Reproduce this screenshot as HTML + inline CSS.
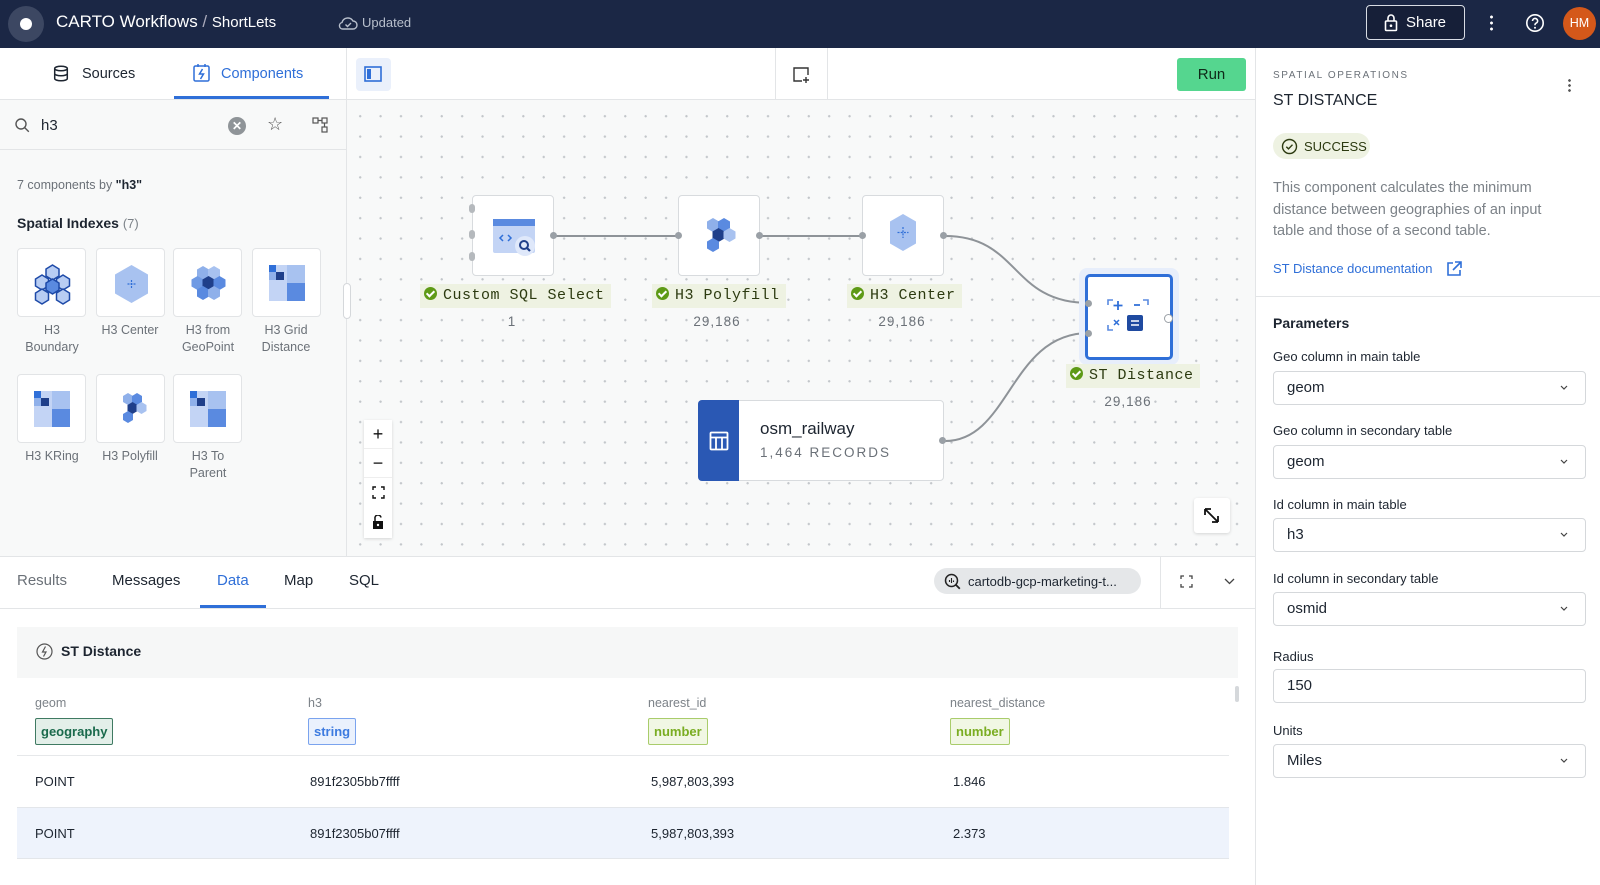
<!DOCTYPE html>
<html><head><meta charset="utf-8">
<style>
*{box-sizing:border-box;margin:0;padding:0}
body{width:1600px;height:885px;overflow:hidden;font-family:"Liberation Sans",sans-serif;color:#1d2530;background:#fff;position:relative}
.abs{position:absolute}
.hdr{left:0;top:0;width:1600px;height:48px;background:#1b2745}
.card{position:absolute;width:69px;height:69px;background:#fff;border:1px solid #e2e4e6;border-radius:4px}
.clbl{position:absolute;width:80px;text-align:center;font-size:12.5px;color:#6b7178;line-height:17px}
.node{position:absolute;width:82px;height:81px;background:#fff;border:1px solid #d8dbde;border-radius:4px}
.nlbl{position:absolute;height:24px;background:#eef2e2;font-family:"Liberation Mono",monospace;font-size:15px;color:#2c3a10;line-height:24px;padding:0 6px 0 4px;white-space:nowrap;letter-spacing:0.5px}
.chk{display:inline-block;width:13px;height:13px;border-radius:50%;background:#5e9a16;vertical-align:-1px;margin-right:6px;position:relative}
.chk:after{content:"";position:absolute;left:4px;top:2px;width:3px;height:6px;border:solid #fff;border-width:0 2px 2px 0;transform:rotate(45deg)}
.cnt{position:absolute;font-size:13.5px;color:#6b7178;letter-spacing:1px;text-align:center;width:100px}
.port{position:absolute;width:7px;height:7px;border-radius:50%;background:#9aa0a6}
.plbl{position:absolute;left:1273px;font-size:13px;color:#1d2530}
.inp{position:absolute;left:1273px;width:313px;height:34px;border:1px solid #d5d8db;border-radius:4px;font-size:15px;line-height:32px;padding-left:13px;color:#1d2530}
.inp svg{position:absolute;right:17px;top:13px}
.btab{position:absolute;top:572px;font-size:15px;color:#1d2530}
.th{position:absolute;top:696px;font-size:12.5px;color:#7c8288}
.badge{position:absolute;top:718px;height:27px;border-radius:2px;font-size:13px;font-weight:bold;line-height:25px;padding:0 5px}
.td{position:absolute;font-size:13px;color:#1d2530}
.zb{position:absolute;left:364px;width:28px;height:29px;background:#fff;border-bottom:1px solid #eee;text-align:center;font-size:18px;line-height:28px;color:#111}
</style></head><body>

<div class="abs hdr"></div>
<div class="abs" style="left:8px;top:6px;width:36px;height:36px;border-radius:50%;background:#3c4762"></div>
<div class="abs" style="left:20px;top:18px;width:12px;height:12px;border-radius:50%;background:#fff"></div>
<div class="abs" style="left:56px;top:12px;font-size:17px;color:#fff;font-weight:500">CARTO Workflows <span style="color:#aab">/</span> <span style="font-size:15px">ShortLets</span></div>
<svg class="abs" style="left:338px;top:15px" width="20" height="16" viewBox="0 0 20 16"><path d="M5 14h10a4 4 0 0 0 0-8 6 6 0 0 0-11 1.5A3.3 3.3 0 0 0 5 14z" fill="none" stroke="#b8bfcc" stroke-width="1.4"/><path d="M7.5 9.5l2 2 3.5-3.5" fill="none" stroke="#b8bfcc" stroke-width="1.4"/></svg>
<div class="abs" style="left:362px;top:15px;font-size:13px;color:#b8bfcc">Updated</div>
<div class="abs" style="left:1366px;top:5px;width:99px;height:35px;border:1px solid #d8dce4;border-radius:4px;background:#161f38"></div>
<svg class="abs" style="left:1384px;top:13px" width="14" height="19" viewBox="0 0 14 19"><rect x="1.5" y="8" width="11" height="9.5" rx="1" fill="none" stroke="#fff" stroke-width="1.6"/><path d="M4 8V5a3 3 0 0 1 6 0v3" fill="none" stroke="#fff" stroke-width="1.6"/><circle cx="7" cy="12.7" r="1.3" fill="#fff"/></svg>
<div class="abs" style="left:1406px;top:14px;font-size:15px;color:#fff;font-weight:500">Share</div>
<div class="abs" style="left:1490px;top:14px;width:3px;height:17px;background:radial-gradient(circle,#fff 1.3px,transparent 1.6px) 0 0/3px 6px"></div>
<svg class="abs" style="left:1525px;top:13px" width="20" height="20" viewBox="0 0 20 20"><circle cx="10" cy="10" r="8.2" fill="none" stroke="#fff" stroke-width="1.6"/><path d="M7.6 8a2.5 2.5 0 1 1 3.3 2.3c-.6.3-.9.7-.9 1.4v.5" fill="none" stroke="#fff" stroke-width="1.6"/><circle cx="10" cy="14.8" r="1" fill="#fff"/></svg>
<div class="abs" style="left:1563px;top:7px;width:33px;height:33px;border-radius:50%;background:#d4581a;color:#fff;font-size:12.5px;line-height:33px;text-align:center">HM</div>

<div class="abs" style="left:0;top:48px;width:347px;height:508px;background:#f8f9f9;border-right:1px solid #e3e5e7"></div>
<div class="abs" style="left:0;top:48px;width:346px;height:52px;background:#fff;border-bottom:1px solid #e3e5e7"></div>
<svg class="abs" style="left:53px;top:65px" width="16" height="17" viewBox="0 0 16 17"><ellipse cx="8" cy="3.5" rx="6.3" ry="2.3" fill="none" stroke="#1d2530" stroke-width="1.5"/><path d="M1.7 3.5v10c0 1.3 2.8 2.3 6.3 2.3s6.3-1 6.3-2.3v-10M1.7 8.5c0 1.3 2.8 2.3 6.3 2.3s6.3-1 6.3-2.3" fill="none" stroke="#1d2530" stroke-width="1.5"/></svg>
<div class="abs" style="left:82px;top:66px;font-size:14.5px;color:#1d2530">Sources</div>
<svg class="abs" style="left:193px;top:64px" width="17" height="18" viewBox="0 0 17 18"><rect x="1" y="2" width="15" height="15" rx="1.5" fill="none" stroke="#2f6fd8" stroke-width="1.5"/><path d="M9.5 5L6.5 10h4l-3 5" fill="none" stroke="#2f6fd8" stroke-width="1.5"/><path d="M5 0v3M12 0v3" stroke="#2f6fd8" stroke-width="1.5"/></svg>
<div class="abs" style="left:221px;top:66px;font-size:14.5px;color:#2f6fd8;font-weight:500">Components</div>
<div class="abs" style="left:174px;top:96px;width:155px;height:3px;background:#2f6fd8"></div>

<div class="abs" style="left:0;top:100px;width:346px;height:50px;background:#f8f9f9;border-bottom:1px solid #e3e5e7"></div>
<svg class="abs" style="left:15px;top:118px" width="15" height="15" viewBox="0 0 15 15"><circle cx="6" cy="6" r="5" fill="none" stroke="#555" stroke-width="1.4"/><path d="M9.8 9.8l4 4" stroke="#555" stroke-width="1.4"/></svg>
<div class="abs" style="left:41px;top:117px;font-size:15px;color:#1d2530">h3</div>
<div class="abs" style="left:228px;top:117px;width:18px;height:18px;border-radius:50%;background:#8f9498;color:#fff;font-size:12px;line-height:18px;text-align:center;font-weight:bold">✕</div>
<div class="abs" style="left:267px;top:114px;font-size:18px;color:#555">☆</div>
<svg class="abs" style="left:312px;top:117px" width="17" height="17" viewBox="0 0 17 17" fill="none" stroke="#555" stroke-width="1.2"><rect x="1" y="1" width="5" height="5"/><rect x="10" y="1" width="5" height="5"/><rect x="10" y="10" width="5" height="5"/><path d="M6 3.5h4M12.5 6v4"/></svg>

<div class="abs" style="left:17px;top:178px;font-size:12.5px;color:#6b7178">7 components by <b style="color:#1d2530">"h3"</b></div>
<div class="abs" style="left:17px;top:215px;font-size:14px;color:#1d2530;font-weight:bold">Spatial Indexes <span style="font-weight:normal;color:#7c8288;font-size:13px">(7)</span></div>

<div class="card" style="left:17px;top:248px"><svg width="69" height="69" viewBox="0 0 69 69"><g stroke="#1e4aa8" stroke-width="1.5"><polygon points="34.5,16 41,20 41,27 34.5,31 28,27 28,20" fill="#b8cdf3"/><polygon points="24,26 30.5,30 30.5,37 24,41 17.5,37 17.5,30" fill="#b8cdf3"/><polygon points="45,26 51.5,30 51.5,37 45,41 38.5,37 38.5,30" fill="#b8cdf3"/><polygon points="34.5,30 41,34 41,41 34.5,45 28,41 28,34" fill="#5a8ae0"/><polygon points="24,40 30.5,44 30.5,51 24,55 17.5,51 17.5,44" fill="#b8cdf3"/><polygon points="45,40 51.5,44 51.5,51 45,55 38.5,51 38.5,44" fill="#b8cdf3"/></g></svg></div>
<div class="card" style="left:96px;top:248px"><svg width="69" height="69" viewBox="0 0 69 69"><polygon points="34.5,16 51,25.5 51,44.5 34.5,54 18,44.5 18,25.5" fill="#a8c2f0"/><path d="M34.5 31v8M30.5 35h8" stroke="#2f6fd8" stroke-width="1.2" stroke-dasharray="2 1"/></svg></div>
<div class="card" style="left:173px;top:248px"><svg width="69" height="69" viewBox="0 0 69 69"><g><polygon points="29,17 35,20.5 35,27.5 29,31 23,27.5 23,20.5" fill="#8fb0ea"/><polygon points="40,17 46,20.5 46,27.5 40,31 34,27.5 34,20.5" fill="#a8c2f0"/><polygon points="23.5,27 29.5,30.5 29.5,37.5 23.5,41 17.5,37.5 17.5,30.5" fill="#6f9ae4"/><polygon points="34.5,27 40.5,30.5 40.5,37.5 34.5,41 28.5,37.5 28.5,30.5" fill="#1f3f8a"/><polygon points="45.5,27 51.5,30.5 51.5,37.5 45.5,41 39.5,37.5 39.5,30.5" fill="#5a8ae0"/><polygon points="29,37 35,40.5 35,47.5 29,51 23,47.5 23,40.5" fill="#5a8ae0"/><polygon points="40,37 46,40.5 46,47.5 40,51 34,47.5 34,40.5" fill="#8fb0ea"/></g></svg></div>
<div class="card" style="left:252px;top:248px"><svg width="69" height="69" viewBox="0 0 69 69"><rect x="16" y="16" width="36" height="36" fill="#c3d4f5"/><rect x="34" y="34" width="18" height="18" fill="#5a8ae0"/><rect x="34" y="16" width="18" height="18" fill="#a8c2f0"/><rect x="16" y="16" width="7" height="7" fill="#2f6fd8"/><rect x="23" y="23" width="8" height="8" fill="#1f3f8a"/><rect x="16" y="23" width="7" height="8" fill="#8fb0ea"/></svg></div>
<div class="clbl" style="left:12px;top:322px">H3<br>Boundary</div>
<div class="clbl" style="left:90px;top:322px">H3 Center</div>
<div class="clbl" style="left:168px;top:322px">H3 from<br>GeoPoint</div>
<div class="clbl" style="left:246px;top:322px">H3 Grid<br>Distance</div>
<div class="card" style="left:17px;top:374px"><svg width="69" height="69" viewBox="0 0 69 69"><rect x="16" y="16" width="36" height="36" fill="#c3d4f5"/><rect x="34" y="34" width="18" height="18" fill="#5a8ae0"/><rect x="34" y="16" width="18" height="18" fill="#a8c2f0"/><rect x="16" y="16" width="7" height="7" fill="#2f6fd8"/><rect x="23" y="23" width="8" height="8" fill="#1f3f8a"/><rect x="16" y="23" width="7" height="8" fill="#8fb0ea"/></svg></div>
<div class="card" style="left:96px;top:374px"><svg width="69" height="69" viewBox="0 0 69 69"><polygon points="31,18 36,21 36,27 31,30 26,27 26,21" fill="#8fb0ea"/><polygon points="40,18 45,21 45,27 40,30 35,27 35,21" fill="#5a8ae0"/><polygon points="35.5,27 40.5,30 40.5,36 35.5,39 30.5,36 30.5,30" fill="#1f3f8a"/><polygon points="44.5,27 49.5,30 49.5,36 44.5,39 39.5,36 39.5,30" fill="#a8c2f0"/><polygon points="31,36 36,39 36,45 31,48 26,45 26,39" fill="#5a8ae0"/></svg></div>
<div class="card" style="left:173px;top:374px"><svg width="69" height="69" viewBox="0 0 69 69"><rect x="16" y="16" width="36" height="36" fill="#c3d4f5"/><rect x="34" y="34" width="18" height="18" fill="#5a8ae0"/><rect x="34" y="16" width="18" height="18" fill="#a8c2f0"/><rect x="16" y="16" width="7" height="7" fill="#2f6fd8"/><rect x="23" y="23" width="8" height="8" fill="#1f3f8a"/><rect x="16" y="23" width="7" height="8" fill="#8fb0ea"/></svg></div>
<div class="clbl" style="left:12px;top:448px">H3 KRing</div>
<div class="clbl" style="left:90px;top:448px">H3 Polyfill</div>
<div class="clbl" style="left:168px;top:448px">H3 To<br>Parent</div>

<div class="abs" style="left:347px;top:100px;width:908px;height:456px;background-color:#f8f9f9;background-image:radial-gradient(circle,#c2c6ca 1px,transparent 1.3px);background-size:20.4px 20.4px;background-position:3px 6px"></div>
<div class="abs" style="left:343px;top:283px;width:8px;height:36px;border:1px solid #d5d8db;border-radius:4px;background:#fff"></div>
<div class="abs" style="left:347px;top:48px;width:908px;height:52px;background:#fff;border-bottom:1px solid #e3e5e7"></div>
<div class="abs" style="left:356px;top:58px;width:35px;height:33px;border-radius:4px;background:#eaf0fb"></div>
<svg class="abs" style="left:364px;top:66px" width="18" height="16" viewBox="0 0 18 16"><rect x="1" y="1" width="16" height="14" fill="none" stroke="#2f6fd8" stroke-width="1.6"/><rect x="3" y="3" width="4" height="10" fill="#2f6fd8"/></svg>
<div class="abs" style="left:775px;top:48px;width:1px;height:52px;background:#e3e5e7"></div>
<div class="abs" style="left:827px;top:48px;width:1px;height:52px;background:#e3e5e7"></div>
<svg class="abs" style="left:792px;top:66px" width="18" height="18" viewBox="0 0 18 18"><path d="M10 15H2V2h14v7" fill="none" stroke="#333" stroke-width="1.4"/><path d="M14 11v6M11 14h6" stroke="#333" stroke-width="1.4"/></svg>
<div class="abs" style="left:1177px;top:58px;width:69px;height:33px;border-radius:3px;background:#55d68f;color:#0f2a19;font-size:15px;line-height:33px;text-align:center">Run</div>
<div class="abs" style="left:1255px;top:48px;width:1px;height:837px;background:#e3e5e7"></div>

<svg class="abs" style="left:0;top:0" width="1255" height="556"><g fill="none" stroke="#8e9398" stroke-width="2"><path d="M556 236H678"/><path d="M761 236H862"/><path d="M945 236C1020 236 1010 303 1089 303"/><path d="M945 441C1010 441 1010 333 1089 333"/></g></svg>

<div class="node" style="left:472px;top:195px"><svg width="80" height="79" viewBox="0 0 80 79"><rect x="20" y="23" width="42" height="34" rx="2" fill="#c3d4f5"/><rect x="20" y="23" width="42" height="7" fill="#5a8ae0"/><path d="M30 39l-3 3 3 3M35 39l3 3-3 3" fill="none" stroke="#2f6fd8" stroke-width="1.5"/><circle cx="52" cy="50" r="10" fill="#dfe8fa"/><circle cx="51" cy="49" r="4" fill="none" stroke="#1f3f8a" stroke-width="2"/><path d="M54 52l3 3" stroke="#1f3f8a" stroke-width="2.2"/></svg></div>
<div class="abs" style="left:469px;top:204px;width:6px;height:9px;border-radius:3px;background:#b5b9bd"></div>
<div class="abs" style="left:469px;top:230px;width:6px;height:9px;border-radius:3px;background:#b5b9bd"></div>
<div class="abs" style="left:469px;top:252px;width:6px;height:9px;border-radius:3px;background:#b5b9bd"></div>
<div class="port" style="left:550px;top:232px"></div>
<div class="node" style="left:678px;top:195px"><svg width="80" height="79" viewBox="0 0 80 79"><polygon points="34,22 40,25.5 40,32.5 34,36 28,32.5 28,25.5" fill="#8fb0ea"/><polygon points="45,22 51,25.5 51,32.5 45,36 39,32.5 39,25.5" fill="#5a8ae0"/><polygon points="39.5,32 45.5,35.5 45.5,42.5 39.5,46 33.5,42.5 33.5,35.5" fill="#1f3f8a"/><polygon points="50.5,32 56.5,35.5 56.5,42.5 50.5,46 44.5,42.5 44.5,35.5" fill="#a8c2f0"/><polygon points="34,42 40,45.5 40,52.5 34,56 28,52.5 28,45.5" fill="#5a8ae0"/></svg></div>
<div class="port" style="left:675px;top:232px"></div><div class="port" style="left:756px;top:232px"></div>
<div class="node" style="left:862px;top:195px"><svg width="80" height="79" viewBox="0 0 80 79"><polygon points="40,18 53,25.5 53,47.5 40,55 27,47.5 27,25.5" fill="#a8c2f0"/><path d="M40 31v11M34.5 36.5h11" stroke="#2f6fd8" stroke-width="1.2" stroke-dasharray="2 1.2"/></svg></div>
<div class="port" style="left:859px;top:232px"></div><div class="port" style="left:940px;top:232px"></div>
<div class="abs" style="left:1079px;top:268px;width:100px;height:97px;border-radius:8px;background:#e7eefb"></div>
<div class="abs" style="left:1085px;top:274px;width:88px;height:86px;border-radius:5px;background:#fff;border:3px solid #2f6fd8"><svg width="82" height="80" viewBox="0 0 82 80"><path d="M20 28v-5h5M55 23h5v5M20 48v5h5" fill="none" stroke="#5a8ae0" stroke-width="1.6"/><path d="M30 24v9M25.5 28.5h9M46 28h6" stroke="#2f6fd8" stroke-width="1.8"/><path d="M26 43l5 5M31 43l-5 5" stroke="#2f6fd8" stroke-width="1.5"/><rect x="39" y="38" width="16" height="16" rx="2" fill="#1f4aa0"/><path d="M43 44h8M43 48h8" stroke="#fff" stroke-width="1.6"/></svg></div>
<div class="port" style="left:1085px;top:300px"></div><div class="port" style="left:1085px;top:330px"></div>
<div class="abs" style="left:1164px;top:314px;width:9px;height:9px;border-radius:50%;background:#fff;border:1.5px solid #9aa0a6"></div>

<div class="nlbl" style="left:420px;top:284px"><span class="chk"></span>Custom SQL Select</div>
<div class="cnt" style="left:462px;top:314px">1</div>
<div class="nlbl" style="left:652px;top:284px"><span class="chk"></span>H3 Polyfill</div>
<div class="cnt" style="left:667px;top:314px">29,186</div>
<div class="nlbl" style="left:847px;top:284px"><span class="chk"></span>H3 Center</div>
<div class="cnt" style="left:852px;top:314px">29,186</div>
<div class="nlbl" style="left:1066px;top:364px"><span class="chk"></span>ST Distance</div>
<div class="cnt" style="left:1078px;top:394px">29,186</div>

<div class="abs" style="left:698px;top:400px;width:246px;height:81px;background:#fff;border:1px solid #d8dbde;border-radius:4px"></div>
<div class="abs" style="left:698px;top:400px;width:41px;height:81px;background:#2a58b4;border-radius:4px 0 0 4px"></div>
<svg class="abs" style="left:709px;top:431px" width="20" height="20" viewBox="0 0 20 20"><rect x="1.5" y="1.5" width="17" height="17" rx="1" fill="none" stroke="#fff" stroke-width="1.8"/><path d="M1.5 6.5h17M7 6.5v12M13 6.5v12" stroke="#fff" stroke-width="1.8"/></svg>
<div class="abs" style="left:760px;top:419px;font-size:17px;color:#1d2530">osm_railway</div>
<div class="abs" style="left:760px;top:445px;font-size:13.5px;color:#6b7178;letter-spacing:2px">1,464 RECORDS</div>
<div class="port" style="left:939px;top:437px"></div>

<div class="abs" style="left:364px;top:420px;width:28px;height:118px;background:#fff;box-shadow:0 1px 3px rgba(0,0,0,.15)"></div>
<div class="zb" style="top:420px">+</div>
<div class="zb" style="top:449px">−</div>
<svg class="abs" style="left:372px;top:486px" width="13" height="13" viewBox="0 0 13 13"><path d="M1 4V1h3M9 1h3v3M1 9v3h3M12 9v3H9" fill="none" stroke="#111" stroke-width="1.4"/></svg>
<svg class="abs" style="left:372px;top:515px" width="12" height="14" viewBox="0 0 12 14"><rect x="1" y="6" width="10" height="8" fill="#111"/><path d="M3 6V3.5a3 3 0 0 1 6-1" fill="none" stroke="#111" stroke-width="1.5"/><circle cx="6" cy="10" r="1.2" fill="#fff"/></svg>
<div class="abs" style="left:1194px;top:498px;width:36px;height:35px;background:#fff;border-radius:3px;box-shadow:0 1px 3px rgba(0,0,0,.15)"></div>
<svg class="abs" style="left:1202px;top:506px" width="19" height="19" viewBox="0 0 19 19"><path d="M3 3l13 13M3 3v6M3 3h6M16 16v-6M16 16h-6" fill="none" stroke="#111" stroke-width="1.8"/></svg>

<div class="abs" style="left:0;top:556px;width:1255px;height:1px;background:#e3e5e7"></div>
<div class="abs" style="left:0;top:608px;width:1255px;height:1px;background:#e3e5e7"></div>
<div class="btab" style="left:17px;color:#6b7178">Results</div>
<div class="btab" style="left:112px">Messages</div>
<div class="btab" style="left:217px;color:#2f6fd8">Data</div>
<div class="btab" style="left:284px">Map</div>
<div class="btab" style="left:349px">SQL</div>
<div class="abs" style="left:200px;top:605px;width:66px;height:3px;background:#2f6fd8"></div>
<div class="abs" style="left:934px;top:568px;width:207px;height:26px;border-radius:13px;background:#e5e7e9"></div>
<svg class="abs" style="left:944px;top:573px" width="17" height="17" viewBox="0 0 17 17"><circle cx="7.5" cy="7.5" r="6" fill="none" stroke="#222" stroke-width="1.5"/><path d="M11.8 11.8l4 4" stroke="#222" stroke-width="1.8"/><path d="M5.5 9V7M7.5 10V5M9.5 9V7.5" stroke="#222" stroke-width="1.1"/></svg>
<div class="abs" style="left:968px;top:574px;font-size:13px;color:#1d2530">cartodb-gcp-marketing-t...</div>
<div class="abs" style="left:1160px;top:556px;width:1px;height:52px;background:#e3e5e7"></div>
<svg class="abs" style="left:1180px;top:575px" width="13" height="13" viewBox="0 0 13 13"><path d="M1 4V1h3M9 1h3v3M1 9v3h3M12 9v3H9" fill="none" stroke="#444" stroke-width="1.3"/></svg>
<svg class="abs" style="left:1224px;top:578px" width="11" height="7" viewBox="0 0 11 7"><path d="M1 1l4.5 4.5L10 1" fill="none" stroke="#444" stroke-width="1.3"/></svg>

<div class="abs" style="left:17px;top:627px;width:1221px;height:51px;background:#f6f7f7"></div>
<svg class="abs" style="left:36px;top:643px" width="17" height="17" viewBox="0 0 17 17"><circle cx="8.5" cy="8.5" r="7.5" fill="none" stroke="#555" stroke-width="1.2"/><path d="M9.5 3.5L6.5 9h3.5l-2.5 4.5" fill="none" stroke="#555" stroke-width="1.2"/></svg>
<div class="abs" style="left:61px;top:643px;font-size:14px;color:#1d2530;font-weight:bold">ST Distance</div>

<div class="th" style="left:35px">geom</div>
<div class="th" style="left:308px">h3</div>
<div class="th" style="left:648px">nearest_id</div>
<div class="th" style="left:950px">nearest_distance</div>
<div class="badge" style="left:35px;background:#e3efe9;border:1px solid #3f7a62;color:#1a6a4c">geography</div>
<div class="badge" style="left:308px;background:#eaf1fd;border:1px solid #7aa3ee;color:#3d7be0">string</div>
<div class="badge" style="left:648px;background:#f1f7e4;border:1px solid #a9cc6b;color:#7aad22">number</div>
<div class="badge" style="left:950px;background:#f1f7e4;border:1px solid #a9cc6b;color:#7aad22">number</div>
<div class="abs" style="left:1235px;top:686px;width:4px;height:16px;border-radius:2px;background:#d5d8db"></div>
<div class="abs" style="left:17px;top:755px;width:1212px;height:1px;background:#e6e8ea"></div>
<div class="abs" style="left:17px;top:807px;width:1212px;height:52px;background:#eef3fc;border-top:1px solid #e3e6ea;border-bottom:1px solid #e3e6ea"></div>
<div class="td" style="left:35px;top:774px">POINT</div>
<div class="td" style="left:310px;top:774px">891f2305bb7ffff</div>
<div class="td" style="left:651px;top:774px">5,987,803,393</div>
<div class="td" style="left:953px;top:774px">1.846</div>
<div class="td" style="left:35px;top:826px">POINT</div>
<div class="td" style="left:310px;top:826px">891f2305b07ffff</div>
<div class="td" style="left:651px;top:826px">5,987,803,393</div>
<div class="td" style="left:953px;top:826px">2.373</div>

<div class="abs" style="left:1273px;top:70px;font-size:10px;color:#6b7178;letter-spacing:1.6px">SPATIAL OPERATIONS</div>
<div class="abs" style="left:1568px;top:78px;width:3px;height:14px;background:radial-gradient(circle,#555 1.2px,transparent 1.5px) 0 0/3px 5px"></div>
<div class="abs" style="left:1273px;top:92px;font-size:16px;color:#1d2530">ST DISTANCE</div>
<div class="abs" style="left:1273px;top:133px;width:97px;height:26px;border-radius:13px;background:#eef2e2"></div>
<svg class="abs" style="left:1281px;top:138px" width="17" height="17" viewBox="0 0 17 17"><circle cx="8.5" cy="8.5" r="7" fill="none" stroke="#2c3a10" stroke-width="1.4"/><path d="M5.3 8.7l2.2 2.2 4-4.2" fill="none" stroke="#2c3a10" stroke-width="1.4"/></svg>
<div class="abs" style="left:1304px;top:139px;font-size:13px;color:#2c3a10">SUCCESS</div>
<div class="abs" style="left:1273px;top:178px;width:300px;font-size:14.5px;line-height:21.5px;color:#7c8288">This component calculates the minimum distance between geographies of an input table and those of a second table.</div>
<div class="abs" style="left:1273px;top:261px;font-size:13px;color:#2f6fd8;font-weight:500">ST Distance documentation</div>
<svg class="abs" style="left:1446px;top:261px" width="16" height="16" viewBox="0 0 16 16"><path d="M7 2H2v12h12V9" fill="none" stroke="#2f6fd8" stroke-width="1.6"/><path d="M9 1h6v6M15 1L7 9" fill="none" stroke="#2f6fd8" stroke-width="1.6"/></svg>
<div class="abs" style="left:1256px;top:296px;width:344px;height:1px;background:#e3e5e7"></div>
<div class="abs" style="left:1273px;top:315px;font-size:14px;color:#1d2530;font-weight:bold">Parameters</div>

<div class="plbl" style="top:349px">Geo column in main table</div>
<div class="inp" style="top:371px">geom<svg width="8" height="6" viewBox="0 0 8 6"><path d="M1 1l3 3 3-3" fill="none" stroke="#444" stroke-width="1.2"/></svg></div>
<div class="plbl" style="top:423px">Geo column in secondary table</div>
<div class="inp" style="top:445px">geom<svg width="8" height="6" viewBox="0 0 8 6"><path d="M1 1l3 3 3-3" fill="none" stroke="#444" stroke-width="1.2"/></svg></div>
<div class="plbl" style="top:497px">Id column in main table</div>
<div class="inp" style="top:518px">h3<svg width="8" height="6" viewBox="0 0 8 6"><path d="M1 1l3 3 3-3" fill="none" stroke="#444" stroke-width="1.2"/></svg></div>
<div class="plbl" style="top:571px">Id column in secondary table</div>
<div class="inp" style="top:592px">osmid<svg width="8" height="6" viewBox="0 0 8 6"><path d="M1 1l3 3 3-3" fill="none" stroke="#444" stroke-width="1.2"/></svg></div>
<div class="plbl" style="top:649px">Radius</div>
<div class="inp" style="top:669px">150</div>
<div class="plbl" style="top:723px">Units</div>
<div class="inp" style="top:744px">Miles<svg width="8" height="6" viewBox="0 0 8 6"><path d="M1 1l3 3 3-3" fill="none" stroke="#444" stroke-width="1.2"/></svg></div>
</body></html>
